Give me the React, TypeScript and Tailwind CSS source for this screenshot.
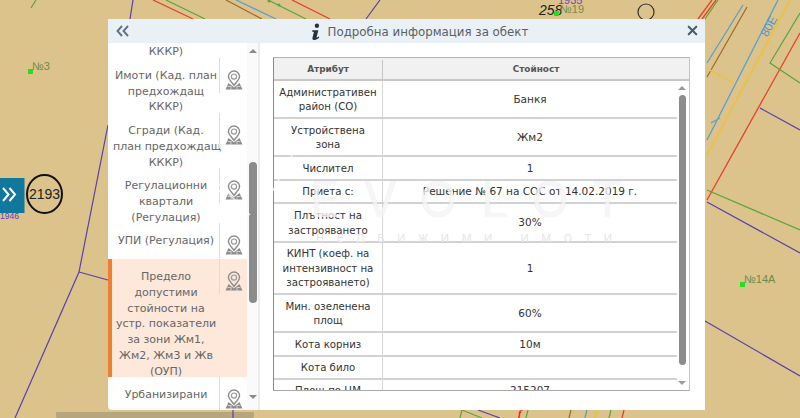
import { X } from "lucide-react";

const rows = [
  { a: ["Административен", "район (СО)"], v: "Банкя", h: "h-[38px]" },
  { a: ["Устройствена", "зона"], v: "Жм2", h: "h-[38px]" },
  { a: ["Числител"], v: "1", h: "h-[24px]" },
  { a: ["Приета с:"], v: "Решение № 67 на СОС от 14.02.2019 г.", h: "h-[23px]" },
  { a: ["Плътност на", "застрояването"], v: "30%", h: "h-[39px]" },
  { a: ["КИНТ (коеф. на", "интензивност на", "застрояването)"], v: "1", h: "h-[52px]" },
  { a: ["Мин. озеленена", "площ"], v: "60%", h: "h-[38px]" },
  { a: ["Кота корниз"], v: "10м", h: "h-[24px]" },
  { a: ["Кота било"], v: "", h: "h-[23px]" },
  { a: ["Площ по ЦМ"], v: "215207", h: "h-[23px]" },
];

const items = [
  { t: ["Имоти (Кад. план", "предхождащ", "КККР)"] },
  { t: ["Сгради (Кад.", "план предхождащ", "КККР)"] },
  { t: ["Регулационни", "квартали", "(Регулация)"] },
  { t: ["УПИ (Регулация)"] },
  {
    t: ["Предело", "допустими", "стойности на", "устр. показатели", "за зони Жм1,", "Жм2, Жм3 и Жв", "(ОУП)"],
    active: true,
  },
  { t: ["Урбанизирани"] },
];

function PinIcon() {
  return (
    <svg width="18" height="20" viewBox="0 0 18 20" fill="none">
      <path d="M9 1a5.6 5.6 0 0 0-5.6 5.6C3.4 10 7 12 9 15.500 11 12 14.600 10 14.600 6.600A5.600 5.600 0 0 0 9 1z" stroke="#8c8c8c" strokeWidth="1.4" />
      <circle cx="9" cy="6.6" r="2.6" stroke="#9a9a9a" strokeWidth="1.2" />
      <path d="M3.500 13 0.500 19.500h17L14.500 13 9 17.500z" fill="#8c8c8c" />
      <path d="M2.500 16.500h4M11.500 16.500h4M6 17v2.500M12 17v2.500" stroke="#fff" strokeWidth="0.6" />
    </svg>
  );
}

function MapLayer() {
  return (
    <svg className="absolute inset-0" width="800" height="418" viewBox="0 0 800 418" fill="none">
      <rect x="56" y="412" width="198" height="6" rx="1" fill="#b7a67d" />
      <g stroke="#5a3fb0" strokeWidth="1.2">
        <path d="M133 0 130 19M108 125 79 272 15 418M79 272 108 280M380 0 366 19" />
        <path d="M760 108 800 130M707 202 800 253M705 321 800 376M233 410v8M478 410l22 8" />
      </g>
      <g stroke="#e8402a" strokeWidth="1.3">
        <path d="M153 0 193 19M292 0 330 19M698 19 712 0M702 19 716 0M707 200 800 33M624 410 622 418" />
      </g>
      <g stroke="#56a83c" strokeWidth="1.2">
        <path d="M166 0 205 19M268 0 306 19M705 19 718 0M800 13 770 63 800 83M707 190 800 230M460 418 462 410 482 418M528 410 526 418M611 410 609 418M36 0 31 8" />
      </g>
      <circle cx="269" cy="1" r="1.5" fill="#56a83c" />
      <circle cx="279" cy="5" r="1.5" fill="#56a83c" />
      <g stroke="#9c6a2c" strokeWidth="1.2">
        <path d="M226 0 262 19M707 77 747 7M571 410 569 418" />
      </g>
      <g stroke="#5aa0cc" strokeWidth="1.3">
        <path d="M236 0 276 19M707 63 743 5M707 140 778 0M587 410 585 418M711 123 720 118" />
      </g>
      <g stroke="#e8c34a" strokeWidth="2">
        <path d="M707 155 790 0M710 70 733 83M597 410 595 418" />
      </g>
      <text x="755" y="33" transform="rotate(-62 765 25)" fontFamily="Liberation Sans, sans-serif" fontSize="12" fill="#4a9ad4">80E</text>
      <text x="558" y="4" fontFamily="Liberation Sans, sans-serif" fontSize="11" fill="#6a4ab8">1935</text>
      <text x="539" y="15" fontFamily="Liberation Sans, sans-serif" fontSize="14" fontStyle="italic" fill="#222">258</text>
      <rect x="554" y="11" width="5" height="5" fill="#22e022" />
      <text x="560" y="13" fontFamily="Liberation Sans, sans-serif" fontSize="11" fill="#7a8a50">№19</text>
      <circle cx="646" cy="12" r="8" stroke="#333" strokeWidth="1.2" />
      <rect x="28" y="69" width="5" height="5" fill="#22e022" />
      <text x="32" y="70" fontFamily="Liberation Sans, sans-serif" fontSize="11" fill="#6f8a4a">№3</text>
      <rect x="740" y="282" width="5" height="5" fill="#22e022" />
      <text x="744" y="283" fontFamily="Liberation Sans, sans-serif" fontSize="11" fill="#6f8a4a">№14A</text>
      <rect x="0" y="178" width="24.5" height="35" fill="#10789c" />
      <path d="M3 188l5.500 6.500L3 201M9.500 188l5.500 6.500L9.500 201" stroke="#fff" strokeWidth="2" />
      <text x="0" y="219" fontFamily="Liberation Sans, sans-serif" fontSize="8.5" fill="#5a3fc0">1946</text>
      <ellipse cx="44.5" cy="194" rx="17.5" ry="19" stroke="#111" strokeWidth="2" />
      <text x="44.5" y="199" textAnchor="middle" fontFamily="Liberation Sans, sans-serif" fontSize="14" fill="#222">2193</text>
      <text x="518" y="417" fontFamily="Liberation Serif, serif" fontStyle="italic" fontWeight="700" fontSize="11" fill="#ee2020">f</text>
    </svg>
  );
}

export default function App() {
  return (
    <div className="relative w-[800px] h-[418px] overflow-hidden bg-[#dcc28b] font-['DejaVu_Sans',sans-serif]">
      <MapLayer />

      {/* Modal */}
      <div className="absolute left-[108px] top-[19px] w-[597px] h-[391px] flex flex-col bg-white rounded-bl-sm">
        <div className="h-[24px] shrink-0 relative flex items-center justify-center pl-[26px] bg-[#e9f1f6]">
          <svg className="absolute left-[8px] top-[6px]" width="13" height="12" viewBox="0 0 13 12" fill="none">
            <path d="M6 1 1.500 6 6 11M12 1 7.500 6 12 11" stroke="#5f7282" strokeWidth="1.9" />
          </svg>
          <svg className="mr-[7px] mt-[2px]" width="10" height="18" viewBox="0 0 11 19" fill="#26323c">
            <circle cx="6.5" cy="2.6" r="2.4" />
            <path d="M1.500 7.500h6.600L6.200 15c-.2.8.6.9 2.400-.5l.6.9C7.400 17.700 4.800 18.500 3 18.200c-1.400-.3-1.700-1.300-1.300-2.700L3.200 9.500 1.200 9z" />
          </svg>
          <span className="text-[11.8px] pt-[3px] text-[#5a5f63]">Подробна информация за обект</span>
          <X className="absolute right-[5px] top-[4px] text-[#4d5f6d]" size={15} strokeWidth={3.4} />
        </div>

        <div className="flex-1 flex min-h-0">
          {/* Left list */}
          <div className="w-[152px] shrink-0 flex border-r-2 border-[#ececec]">
            <div className="w-[139px] shrink-0 overflow-hidden text-[11px] leading-[15.7px] text-[#666]">
              <div className="h-[15px] w-[111px] pt-[1px] pl-[5px] text-center">КККР)</div>
              {items.map((it) => (
                <div
                  key={it.t[0]}
                  className={`flex min-h-[36px] ${it.active ? "bg-[#fde8da] border-l-4 border-[#ef8032]" : ""}`}
                >
                  <div className={`pt-[10px] -mb-[2px] text-center whitespace-nowrap ${it.active ? "w-[107px] pl-[1px]" : "w-[111px] pl-[5px]"}`}>
                    {it.t.map((l) => (
                      <div key={l}>{l}</div>
                    ))}
                  </div>
                  <div className="w-[28px] h-[35px] shrink-0 border-l border-[#dcdcdc] flex justify-center pt-[12px]">
                    <PinIcon />
                  </div>
                </div>
              ))}
            </div>
            <div className="flex-1 relative bg-[#fafafa]">
              <div className="absolute left-[2px] top-[6px] w-0 h-0 border-x-[4px] border-x-transparent border-b-[4px] border-b-[#8a8a8a]" />
              <div className="absolute left-[2px] top-[119px] w-[8px] h-[141px] rounded bg-[#8c8c8c]" />
              <div className="absolute left-[2px] bottom-[11px] w-0 h-0 border-x-[4px] border-x-transparent border-t-[4px] border-t-[#8a8a8a]" />
            </div>
          </div>

          {/* Table */}
          <div className="flex-1 pl-[13px] pr-[15px] pt-[14px] pb-[19px] min-w-0">
            <div className="h-full flex flex-col border-l border-[#8a8a8a] border-r border-r-[#c4c4c4] border-b border-b-[#aaa] border-t border-t-[#b5b5b5] text-[10.5px] leading-[14.5px] text-[#333]">
              <div className="h-[23px] shrink-0 flex bg-[#f1f1f1] border-b-2 border-[#c6c6c6] pt-[2px] text-[8.9px] font-bold text-[#555]">
                <div className="w-[109px] flex items-center justify-center border-r border-[#c6c6c6]">Атрибут</div>
                <div className="flex-1 flex items-center justify-center">Стойност</div>
              </div>
              <div className="flex-1 flex min-h-0">
                <div className="w-[403px] shrink-0 overflow-hidden">
                  {rows.map((r) => (
                    <div key={r.a[0]} className={`${r.h} flex border-b-2 border-[#d2d2d2]`}>
                      <div className="w-[109px] shrink-0 pt-[2px] flex flex-col items-center justify-center text-center text-[10.2px] whitespace-nowrap border-r border-[#d6d6d6]">
                        {r.a.map((l) => (
                          <div key={l}>{l}</div>
                        ))}
                      </div>
                      <div className="flex-1 flex items-center justify-center">{r.v}</div>
                    </div>
                  ))}
                </div>
                <div className="flex-1 relative">
                  <div className="absolute left-[1px] top-[5px] w-0 h-0 border-x-[4px] border-x-transparent border-b-[4px] border-b-[#9a9a9a]" />
                  <div className="absolute left-[1.5px] top-[14px] w-[7.5px] h-[270px] rounded bg-[#8c8c8c]" />
                  <div className="absolute left-[1px] bottom-[5px] w-0 h-0 border-x-[4px] border-x-transparent border-t-[4px] border-t-[#9a9a9a]" />
                </div>
              </div>
            </div>
          </div>
        </div>
      </div>

      {/* Watermark over the modal */}
      <div className="absolute left-[190px] top-[150px] w-[460px] h-[100px] pointer-events-none">
        <svg className="absolute inset-0" width="460" height="100" viewBox="0 0 460 100" fill="none">
          <path d="M10 65 50 15M15 20 60 65M75 55 105 0" stroke="#fff" strokeOpacity="0.8" strokeWidth="1.5" />
        </svg>
        <div className="absolute left-[120px] top-[25px] text-[49px] leading-[50px] tracking-[24px] whitespace-nowrap font-['Inter',sans-serif] font-normal text-white/75 [text-shadow:0_0_1px_rgba(0,0,0,0.15)]">
          EVOLOT
        </div>
        <div className="absolute left-[126px] top-[81px] text-[11px] leading-[14px] tracking-[12.500px] whitespace-nowrap font-['Inter',sans-serif] text-[#e6e6e6]">
          НЕДВИЖИМИ ИМОТИ
        </div>
      </div>
    </div>
  );
}
